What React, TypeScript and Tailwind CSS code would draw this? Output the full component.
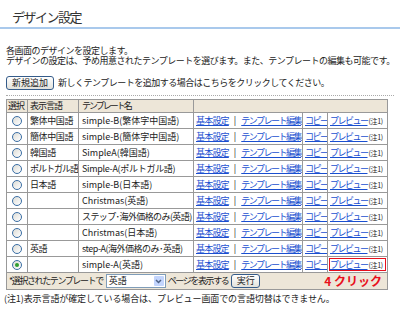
import React from "react";

const rows: { lang: string; name: string; sel?: boolean; lt?: string; nt?: string }[] = [
  { lang: "繁体中国語", name: "simple-B(繁体字中国語)" },
  { lang: "簡体中国語", name: "simple-B(簡体字中国語)" },
  { lang: "韓国語", name: "SimpleA(韓国語)" },
  { lang: "ポルトガル語", name: "Simple-A(ポルトガル語)", lt: "tracking-[-1px]", nt: "tracking-[-0.3px]" },
  { lang: "日本語", name: "simple-B(日本語)" },
  { lang: "", name: "Christmas(英語)" },
  { lang: "", name: "ステップ･海外価格のみ(英語)", nt: "tracking-[-0.6px]" },
  { lang: "", name: "Christmas(日本語)" },
  { lang: "英語", name: "step-A(海外価格のみ･英語)", nt: "tracking-[-0.5px]" },
  { lang: "", name: "simple-A(英語)", sel: true },
];

function Radio({ sel }: { sel?: boolean }) {
  return (
    <span className="mx-auto flex h-[10px] w-[10px] items-center justify-center rounded-full border border-[#3a6ea5] bg-gradient-to-br from-[#dcdcd6] to-white">
      {sel && <span className="block h-[4px] w-[4px] rounded-full bg-[#2f9d2f]" />}
    </span>
  );
}

function Link({ children, cls }: { children: React.ReactNode; cls?: string }) {
  return (
    <span className={`text-[#1a4fd0] underline decoration-[#1a4fd0] underline-offset-[1px] ${cls ?? ""}`}>{children}</span>
  );
}

const rootCls =
  'relative h-[321px] w-[400px] overflow-hidden bg-white font-["Noto_Sans_CJK_JP",sans-serif] text-[9px] leading-[10px] text-[#222]';

export default function App() {
  return (
    <div className={rootCls}>
      <div className="pl-[12px] pt-[9px] text-[13px] leading-[16px] tracking-[-1.5px] text-[#333]">デザイン設定</div>
      <div className="mt-[2px] h-[2px] bg-[#a9c9ec]" />
      <div className="mt-[17px] whitespace-nowrap px-[6px] leading-[10px] tracking-[-0.5px]">
        <div>各画面のデザインを設定します。</div>
        <div>デザインの設定は、予め用意されたテンプレートを選びます。また、テンプレートの編集も可能です。</div>
      </div>
      <div className="mt-[10px] flex items-center gap-[4px] whitespace-nowrap px-[6px]">
        <span className="flex h-[14px] w-[48px] items-center justify-center rounded-[3px] border border-[#355c8a] bg-gradient-to-b from-white to-[#e2e2dc]">
          新規追加
        </span>
        <span className="tracking-[-0.5px]">新しくテンプレートを追加する場合はこちらをクリックしてください。</span>
      </div>
      <div className="mx-[6px] mt-[5px] border-t border-dotted border-[#aaa]" />
      <table className="ml-[6px] mt-[3px] w-[381px] table-fixed border-collapse border border-[#999]">
        <colgroup>
          <col className="w-[21px]" />
          <col className="w-[51px]" />
          <col className="w-[115px]" />
          <col className="w-[109px]" />
          <col className="w-[25px]" />
          <col className="w-[60px]" />
        </colgroup>
        <thead>
          <tr className="h-[13px] bg-[#ede6d8]">
            <th className="overflow-hidden whitespace-nowrap border border-[#999] px-[1px] text-left font-normal tracking-[-1px]">選択</th>
            <th className="overflow-hidden whitespace-nowrap border border-[#999] px-[2px] text-left font-normal tracking-[-1px]">表示言語</th>
            <th className="overflow-hidden whitespace-nowrap border border-[#999] px-[3px] text-left font-normal tracking-[-2px]">テンプレート名</th>
            <th colSpan={3} className="border border-[#999]" />
          </tr>
        </thead>
        <tbody>
          {rows.map((r, i) => (
            <tr key={i} className="h-[16px]">
              <td className="border border-[#999] p-0">
                <Radio sel={r.sel} />
              </td>
              <td className={`overflow-hidden whitespace-nowrap border border-[#999] px-[2px] ${r.lt ?? "tracking-[-0.4px]"}`}>{r.lang}</td>
              <td className={`overflow-hidden whitespace-nowrap border border-[#999] px-[3px] ${r.nt ?? ""}`}>{r.name}</td>
              <td className="overflow-hidden whitespace-nowrap border border-[#999] px-[2px]">
                <Link cls="tracking-[-0.8px]">基本設定</Link>
                <span className="mx-[5px]">|</span>
                <Link cls="tracking-[-1.5px]">テンプレート編集</Link>
              </td>
              <td className="overflow-hidden whitespace-nowrap border border-[#999] px-[2px]">
                <Link cls="tracking-[-1.5px]">コピー</Link>
              </td>
              <td className="relative overflow-hidden whitespace-nowrap border border-[#999] px-[2px]">
                <Link cls="tracking-[-1.5px]">プレビュー</Link>
                <span className="ml-[1px] text-[7px] tracking-[-0.3px]">(注1)</span>
                {r.sel && <span className="absolute inset-[1px] border-[1.5px] border-[#e8101c]" />}
              </td>
            </tr>
          ))}
          <tr className="h-[17px] bg-[#ede6d8]">
            <td colSpan={6} className="border border-[#999] px-[2px]">
              <div className="flex items-center whitespace-nowrap">
                <span className="tracking-[-1.4px]">*選択されたテンプレートで</span>
                <span className="ml-[3px] flex h-[14px] w-[60px] items-center justify-between border border-[#7f9db9] bg-white pl-[2px]">
                  <span>英語</span>
                  <span className="mr-[1px] flex h-[10px] w-[10px] items-center justify-center rounded-[1px] bg-[#c3d5fd]">
                    <svg width="7" height="5" viewBox="0 0 7 5">
                      <path d="M1 1 L3.5 3.5 L6 1" stroke="#4d6185" strokeWidth="1.5" fill="none" />
                    </svg>
                  </span>
                </span>
                <span className="ml-[2px] tracking-[-1.4px]">ページを表示する</span>
                <span className="ml-[3px] flex h-[14px] w-[29px] items-center justify-center rounded-[3px] border border-[#355c8a] bg-gradient-to-b from-white to-[#e2e2dc]">
                  実行
                </span>
                <span className="ml-auto mr-[3px] text-[12px] font-bold leading-[14px] text-[#e8101c]">4 クリック</span>
              </div>
            </td>
          </tr>
        </tbody>
      </table>
      <div className="mt-[3px] whitespace-nowrap px-[4px] leading-[12px] tracking-[-0.1px]">(注1)表示言語が確定している場合は、プレビュー画面での言語切替はできません。</div>
    </div>
  );
}
